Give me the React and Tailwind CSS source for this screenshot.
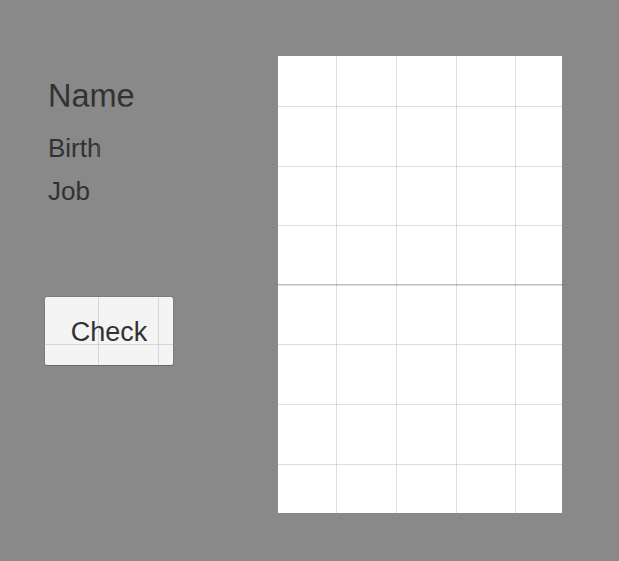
import React from "react";

const STEP = 59.6;
const xs = Array.from({ length: 11 }, (_, i) => Math.round(38.3 + STEP * i)).filter((v) => v < 619);
const ys = Array.from({ length: 10 }, (_, i) => Math.round(46.3 + STEP * i)).filter((v) => v < 561);

function GridOverlay() {
  return (
    <svg
      className="pointer-events-none absolute left-0 top-0"
      width="619"
      height="561"
      viewBox="0 0 619 561"
      shapeRendering="crispEdges"
    >
      {xs.map((x) => (
        <rect key={"v" + x} x={x} y={0} width={1} height={561} fill="rgba(145,145,145,0.3)" />
      ))}
      {ys.map((y) => (
        <rect key={"h" + y} x={0} y={y} width={619} height={1} fill="rgba(145,145,145,0.3)" />
      ))}
      <rect x={274} y={284} width={294} height={1} fill="rgba(110,110,110,0.45)" />
    </svg>
  );
}

export default function App() {
  return (
    <div
      className="relative flex h-[561px] w-[619px] overflow-hidden bg-[#898989] text-[#323232]"
      style={{ fontFamily: '"Liberation Sans", Arial, sans-serif' }}
    >
      <div className="flex w-[278px] flex-col">
        <div className="ml-[48px] mt-[80px] text-[32.5px] leading-[32px]">Name</div>
        <div className="ml-[48px] mt-[23px] text-[26px] leading-[26px]">Birth</div>
        <div className="ml-[48px] mt-[17px] text-[26px] leading-[26px]">Job</div>
        <button className="ml-[44px] mt-[92px] flex h-[70px] w-[130px] items-center justify-center rounded-[3px] border border-[#7c7c7c] border-b-[#686868] bg-[#f4f4f4] pt-[2px] text-[27px] leading-[27px] text-[#323232]">
          Check
        </button>
      </div>
      <div className="mt-[56px] h-[457px] w-[284px] bg-white" />
      <GridOverlay />
    </div>
  );
}
